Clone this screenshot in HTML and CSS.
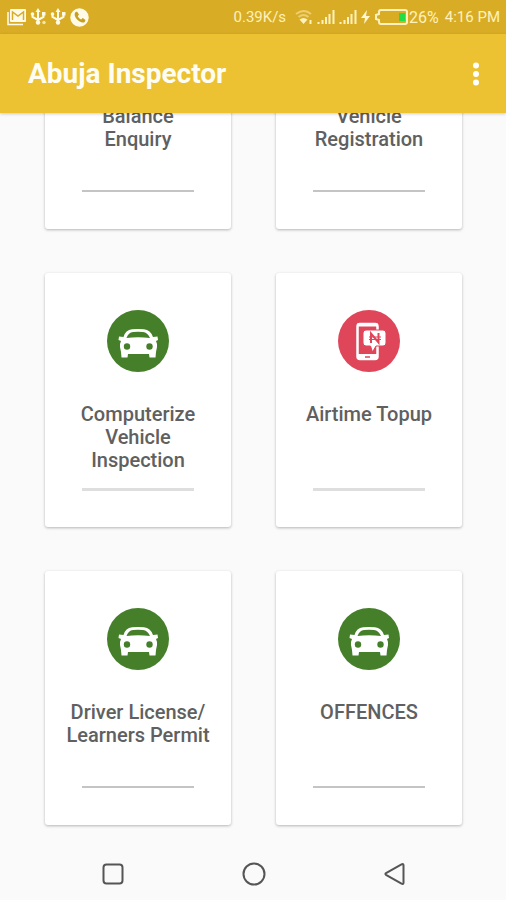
FILE: index.html
```
<!DOCTYPE html>
<html lang="en">
<head>
  <meta charset="UTF-8">
  <meta name="viewport" content="width=device-width, initial-scale=1.0">
  <title>Abuja Inspector</title>
  <link rel="stylesheet" href="styles.css">
</head>
<body>
  <!-- shared icon shapes -->
  <svg class="sprite" aria-hidden="true">
    <symbol id="car" viewBox="0 0 62 62">
      <circle cx="31" cy="31" r="31" fill="#457f29"/>
      <path fill="#fff" fill-rule="evenodd" d="M16.500 27 Q18.500 20 25 19.300 Q31 18.500 37 19.300 Q43.500 20 46 27 L50.500 26.500 L51 30 L49 31 Q50.500 34 50 37 L49 42 L48.500 47.500 L42.500 47.500 L42 44 L21 44 L20.500 47.500 L14.500 47.500 L14 42 L13 37 Q12.500 34 14 31 L11.500 30 L12 26.500 Z M19.500 28 Q31 26.500 43 28 Q40.500 22.500 36 22 Q31 21.500 26 22 Q21.500 22.500 19.500 28 Z"/>
      <circle cx="20" cy="36.500" r="3.200" fill="#457f29"/>
      <circle cx="42.500" cy="36.500" r="3.200" fill="#457f29"/>
    </symbol>
    <symbol id="airtime" viewBox="0 0 62 62">
      <circle cx="31" cy="31" r="31" fill="#df465a"/>
      <rect x="19.500" y="14" width="20" height="35" rx="2.500" fill="none" stroke="#fff" stroke-width="2.500"/>
      <path d="M19 44h21v5H19z M19 13.500h21v3H19z" fill="#fff"/>
      <path d="M27 47h5" stroke="#df465a" stroke-width="1.500"/>
      <path d="M28 20h17q3 0 3 3v10q0 3-3 3h-7l-3.500 6-2-6H28q-3 0-3-3V23q0-3 3-3z" fill="#fff" stroke="#df465a"/>
      <path d="M33 33V23.500L40.500 32.500V23" fill="none" stroke="#df465a" stroke-width="2"/>
      <path d="M31 27h12M31 29.500h12" stroke="#df465a"/>
    </symbol>
    <symbol id="usb" viewBox="0 0 16 18">
      <path d="M8 2v12M2.500 6v3L8 12l5.500-3V6" fill="none" stroke="#fffbe8" stroke-width="2"/>
      <path d="M5.500 4L8 0l2.500 4z" fill="#fffbe8"/>
      <circle cx="8" cy="14.500" r="2.200" fill="#fffbe8"/>
      <circle cx="2.500" cy="6" r="1.800" fill="#fffbe8"/>
      <path d="M12 4h3.500v3.500H12z" fill="#fffbe8"/>
    </symbol>
    <symbol id="signal" viewBox="0 0 18 16">
      <path d="M1.500 13v2M5.500 11v4M9 8v7M12.500 5v10M16.500 1v14" stroke="#fff1bd" stroke-width="2"/>
    </symbol>
  </svg>

  <div class="status-bar">
    <div class="notifications">
      <svg width="19" height="18" viewBox="0 0 19 18"><path d="M1 4v12.500h15" fill="none" stroke="#fffbe8" stroke-width="1.500"/><rect x="3" y="1" width="16" height="13" rx="1" fill="#fffbe8"/><path d="M5.500 12V4l5.500 4 5.500-4v8" fill="none" stroke="#d8ac25" stroke-width="1.500"/></svg>
      <svg width="16" height="18"><use href="#usb"/><circle cx="14" cy="14.500" r="1.700" fill="#f6e6ae"/></svg>
      <svg width="16" height="18"><use href="#usb"/></svg>
      <svg width="19" height="19" viewBox="0 0 19 19"><circle cx="9.500" cy="9.500" r="9.200" fill="#fffbe8"/><path d="M5 4.500l2-1 2 3-1.300 1.700q1.200 2.300 3.400 3.300l1.700-1.500 2.700 2-.8 2q-1.200 1-3.200.3-5-1.800-6.700-6.600-.3-2 .2-3.200z" fill="#c99f22"/></svg>
    </div>
    <div class="system">
      <span>0.39K/s</span>
      <svg class="wifi" width="18" height="16" viewBox="0 0 18 16"><path d="M1 5q8-6 15 0M3.500 8q5-4 10 0" fill="none" stroke="#edcf72" stroke-width="1.800"/><path d="M4.500 10.500q4-3 8 0L8.500 15z" fill="#fff1bd"/><path d="M15.500 11v4" stroke="#fff1bd" stroke-width="2"/></svg>
      <svg width="18" height="16"><use href="#signal"/></svg>
      <svg width="18" height="16"><use href="#signal"/></svg>
      <svg width="9" height="16" viewBox="0 0 9 16"><path d="M6 1L0 9h4l-1 6 6-8H5z" fill="#fff6d4"/></svg>
      <svg width="34" height="16" viewBox="0 0 34 16"><path d="M7 1h24q2 0 2 2v10q0 2-2 2H7q-2 0-2-2v-2L2 10V6l3-1V3q0-2 2-2z" fill="none" stroke="#fff1bd" stroke-width="2"/><path d="M25 4h6v8h-6z" fill="#22dd44"/></svg>
      <span class="battery">26%</span>
      <span>4:16 PM</span>
    </div>
  </div>

  <header class="app-bar">
    <h1>Abuja Inspector</h1>
    <button class="menu" aria-label="More options">
      <svg width="8" height="24" viewBox="0 0 8 24" fill="#fff"><circle cx="4" cy="3.500" r="3"/><circle cx="4" cy="12" r="3"/><circle cx="4" cy="20.500" r="3"/></svg>
    </button>
  </header>

  <main class="content">
    <div class="cards">
      <a class="card" href="#">
        <svg class="icon"><use href="#car"/></svg>
        <span class="title">Balance<br>Enquiry</span>
        <span class="line"></span>
      </a>
      <a class="card" href="#">
        <svg class="icon"><use href="#car"/></svg>
        <span class="title">Vehicle<br>Registration</span>
        <span class="line"></span>
      </a>
      <a class="card" href="#">
        <svg class="icon"><use href="#car"/></svg>
        <span class="title">Computerize<br>Vehicle<br>Inspection</span>
        <span class="line thick"></span>
      </a>
      <a class="card" href="#">
        <svg class="icon"><use href="#airtime"/></svg>
        <span class="title">Airtime Topup</span>
        <span class="line thick"></span>
      </a>
      <a class="card" href="#">
        <svg class="icon"><use href="#car"/></svg>
        <span class="title">Driver License/<br>Learners Permit</span>
        <span class="line"></span>
      </a>
      <a class="card" href="#">
        <svg class="icon"><use href="#car"/></svg>
        <span class="title">OFFENCES</span>
        <span class="line"></span>
      </a>
    </div>
  </main>

  <nav class="nav-bar">
    <button aria-label="Recent apps"><svg width="24" height="24" viewBox="0 0 24 24"><rect x="2.500" y="2.500" width="19" height="19" rx="3"/></svg></button>
    <button aria-label="Home"><svg width="24" height="24" viewBox="0 0 24 24"><circle cx="12" cy="12" r="10.500"/></svg></button>
    <button aria-label="Back"><svg width="24" height="24" viewBox="0 0 24 24"><path d="M3 11.200L18.500 2.300q2-1 2 1v17.400q0 2-2 1L3 12.800q-1.200-.8 0-1.600z"/></svg></button>
  </nav>
</body>
</html>
```
FILE: styles.css
```
:root {
  --bar: #ecc233;
  --status: #d8ac25;
  --page: #fafafa;
  --text: #606060;
}

* {
  box-sizing: border-box;
}

body {
  margin: 0;
  height: 100vh;
  display: flex;
  flex-direction: column;
  font-family: Roboto, "Liberation Sans", sans-serif;
  background: var(--page);
  color: var(--text);
}

button {
  padding: 0;
  border: none;
  background: none;
  cursor: pointer;
}

svg {
  display: block;
  flex: none;
}

.sprite {
  position: absolute;
  width: 0;
  height: 0;
}

.status-bar {
  flex: none;
  height: 34px;
  padding: 0 6px 0 7px;
  display: flex;
  align-items: center;
  justify-content: space-between;
  background: var(--status);
  color: #fff1bd;
  font-size: 15px;
}

.notifications,
.system {
  display: flex;
  align-items: center;
  gap: 4px;
}

.wifi {
  margin-left: 5px;
}

.battery {
  margin: 0 2px 0 -3px;
  font-size: 16px;
}

.app-bar {
  flex: none;
  height: 79px;
  padding: 0 26px 0 28px;
  display: flex;
  align-items: center;
  justify-content: space-between;
  background: var(--bar);
  box-shadow: 0 1px 3px rgba(0,0,0,0.2);
  z-index: 1;
}

.app-bar h1 {
  margin: 0;
  font-size: 28px;
  font-weight: 700;
  color: #fffdf2;
}

.menu {
  padding-left: 16px;
}

/* reversed so the list opens scrolled to its end */
.content {
  flex: 1;
  min-height: 0;
  display: flex;
  flex-direction: column-reverse;
  overflow-y: auto;
  scrollbar-width: none;
}

.cards {
  display: grid;
  grid-template-columns: 1fr 1fr;
  gap: 44px 45px;
  padding: 23px 44px 23px 45px;
}

.card {
  height: 254px;
  padding-top: 37px;
  display: flex;
  flex-direction: column;
  align-items: center;
  background: #fff;
  border-radius: 3px;
  box-shadow: 0 1px 3px rgba(0,0,0,0.28);
  color: inherit;
  text-decoration: none;
}

.icon {
  width: 62px;
  height: 62px;
}

.title {
  min-height: 69px;
  margin: 31px 0 16px;
  font-size: 20px;
  font-weight: 500;
  line-height: 23px;
  text-align: center;
}

.line {
  width: 60%;
  height: 2px;
  background: #c4c4c4;
}

.thick {
  height: 3px;
  background: #dedede;
}

.nav-bar {
  flex: none;
  height: 52px;
  padding: 0 41px 0 43px;
  display: flex;
  align-items: center;
}

.nav-bar button {
  flex: 1;
  display: flex;
  justify-content: center;
}

.nav-bar svg {
  fill: none;
  stroke: #555;
  stroke-width: 2;
}
```
